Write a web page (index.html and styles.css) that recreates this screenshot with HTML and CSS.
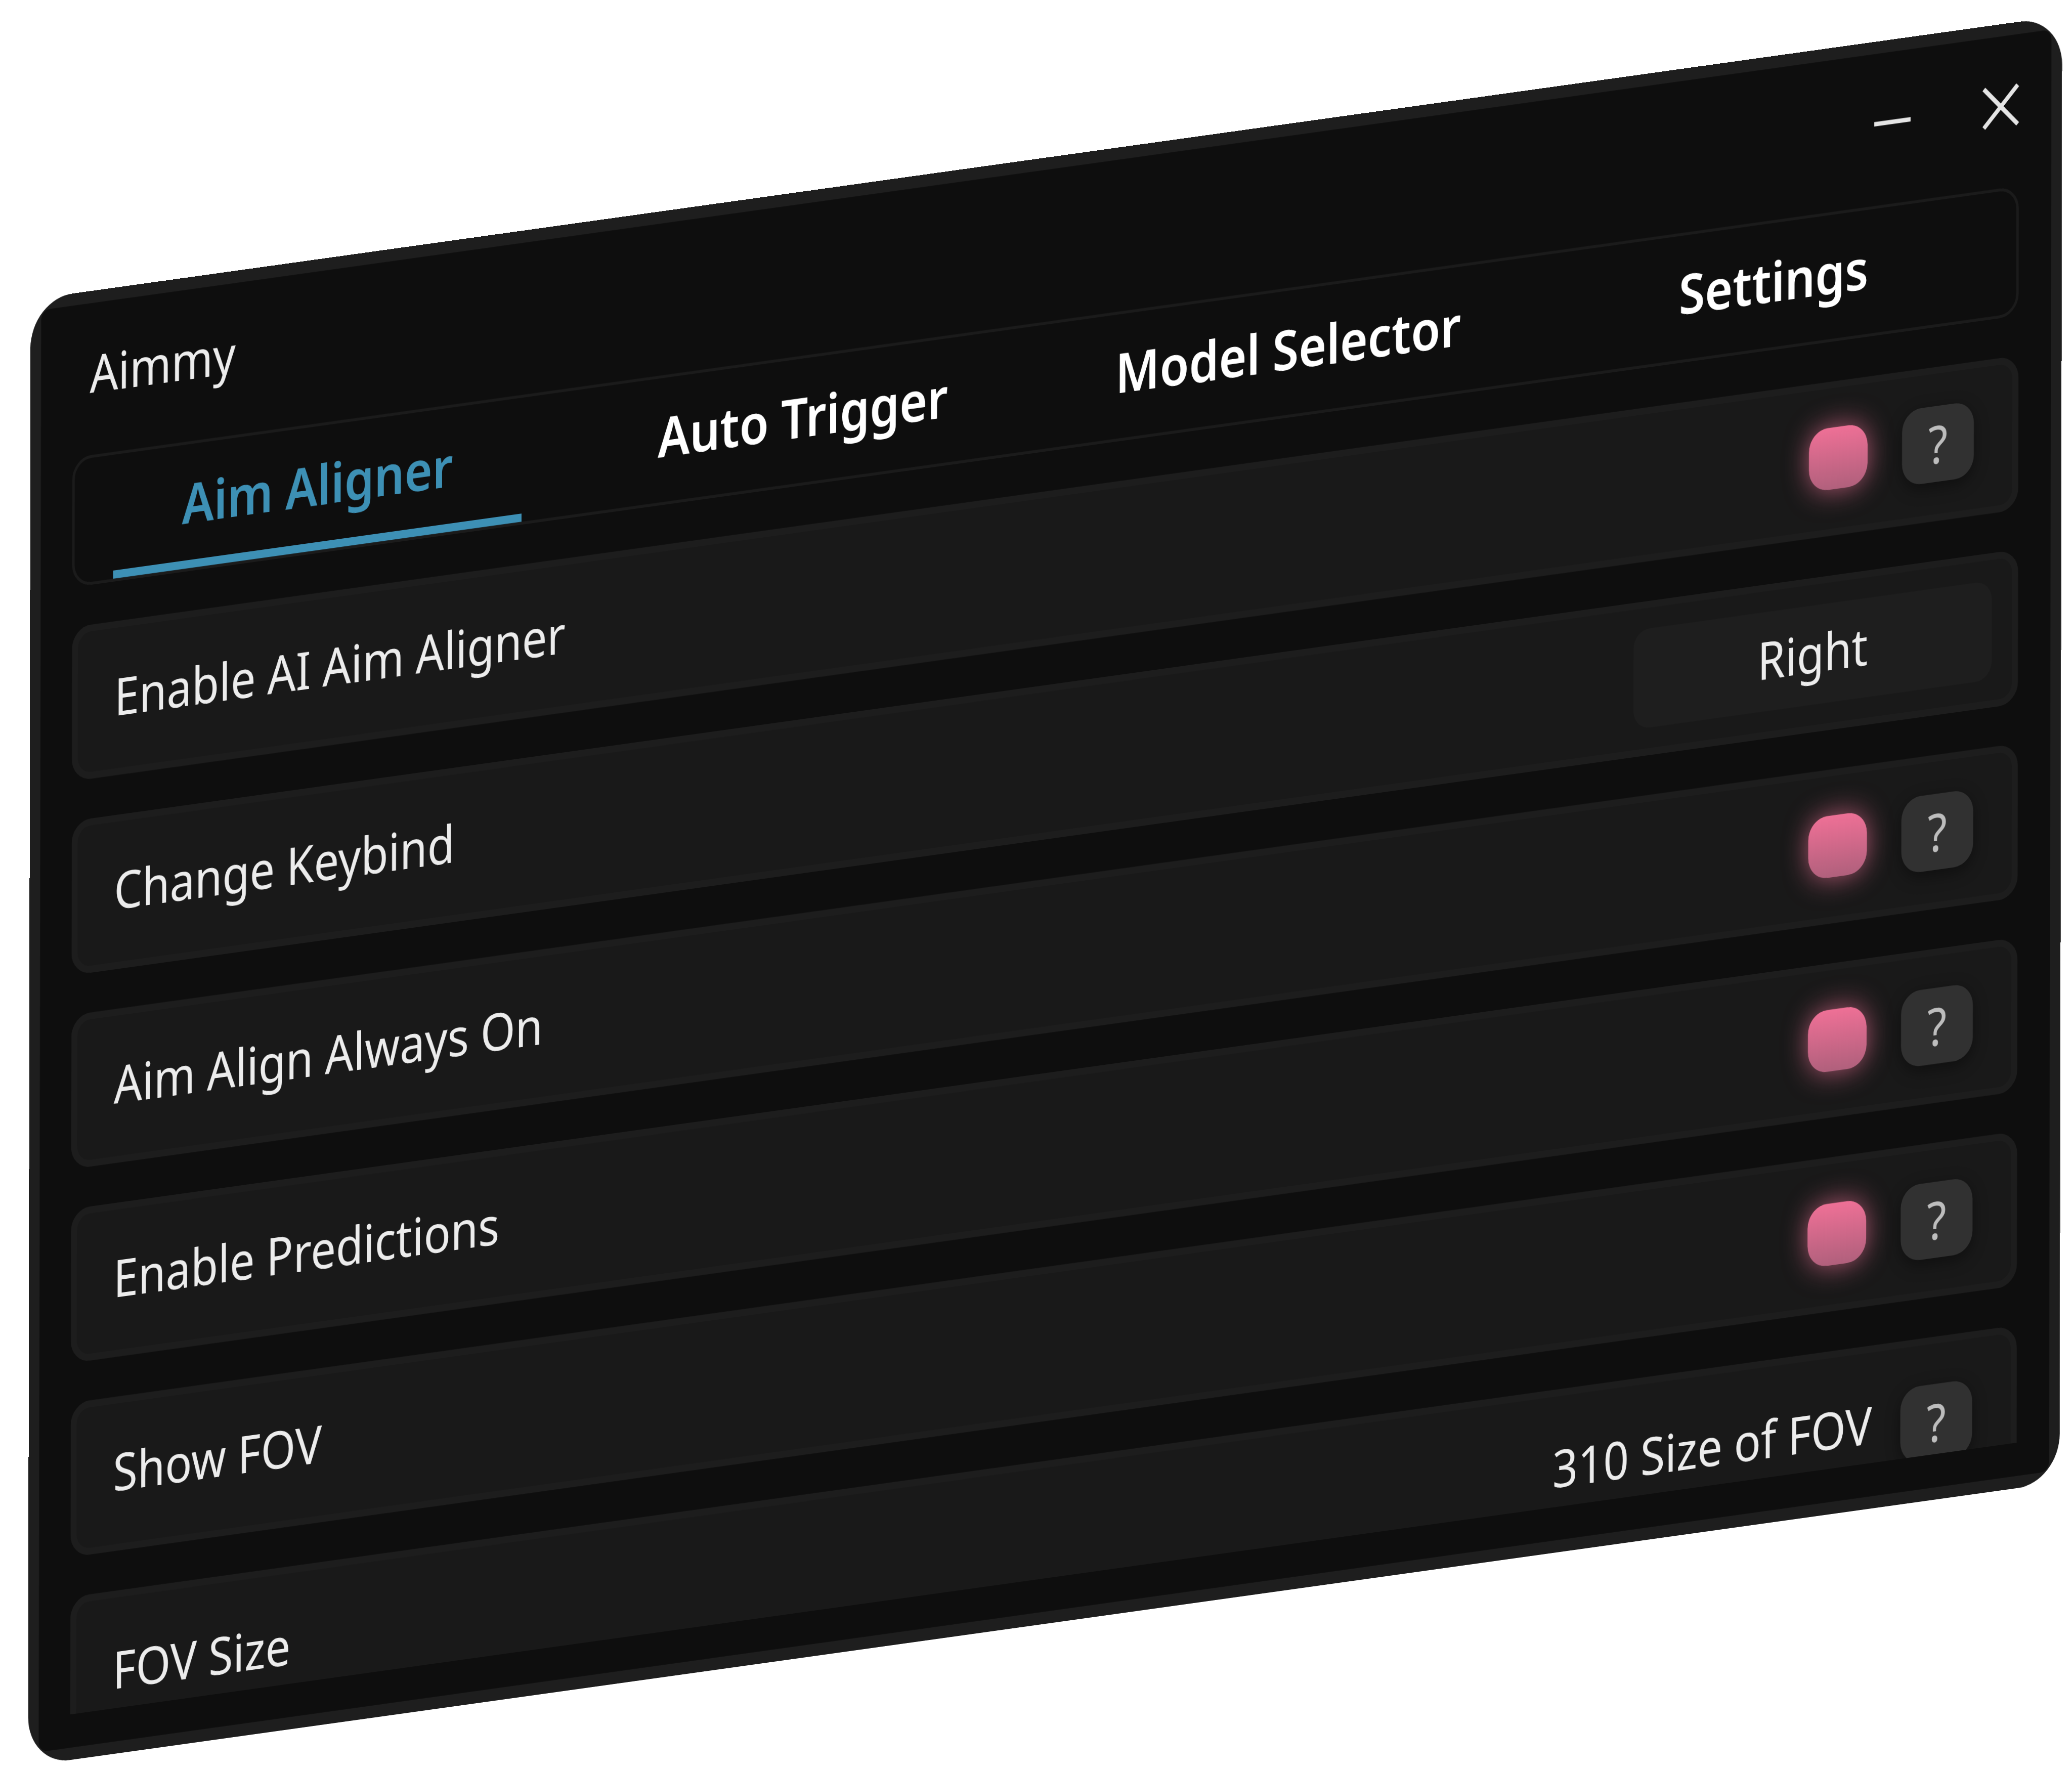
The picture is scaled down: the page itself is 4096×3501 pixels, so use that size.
FILE: index.html
```html
<!DOCTYPE html>
<html lang="en">
<head>
<meta charset="utf-8">
<title>Aimmy</title>
<link rel="stylesheet" href="styles.css">
</head>
<body>
<main class="window">
  <div class="panel">
    <header class="titlebar">
      <h1 class="title">Aimmy</h1>
      <div class="window-buttons">
        <button class="window-button" type="button" aria-label="Minimize">
          <svg viewBox="0 0 84 84"><path d="M0 42H84"/></svg>
        </button>
        <button class="window-button" type="button" aria-label="Close">
          <svg viewBox="0 0 84 84"><path d="M3 3L81 81M81 3L3 81"/></svg>
        </button>
      </div>
    </header>

    <nav class="tabs">
      <button class="tab tab-active" type="button">Aim Aligner</button>
      <button class="tab" type="button">Auto Trigger</button>
      <button class="tab" type="button">Model Selector</button>
      <button class="tab" type="button">Settings</button>
    </nav>

    <section class="options">
      <div class="row">
        <label class="label" for="aligner">Enable AI Aim Aligner</label>
        <input class="toggle" id="aligner" type="checkbox" checked>
        <button class="help" type="button">?</button>
      </div>
      <div class="row row-keybind">
        <label class="label" for="keybind">Change Keybind</label>
        <button class="keybind" id="keybind" type="button">Right</button>
      </div>
      <div class="row">
        <label class="label" for="always">Aim Align Always On</label>
        <input class="toggle" id="always" type="checkbox" checked>
        <button class="help" type="button">?</button>
      </div>
      <div class="row">
        <label class="label" for="predictions">Enable Predictions</label>
        <input class="toggle" id="predictions" type="checkbox" checked>
        <button class="help" type="button">?</button>
      </div>
      <div class="row">
        <label class="label" for="fov">Show FOV</label>
        <input class="toggle" id="fov" type="checkbox" checked>
        <button class="help" type="button">?</button>
      </div>
      <div class="row row-tall">
        <label class="label" for="fov-size">FOV Size</label>
        <output class="value" id="fov-size">310 Size of FOV</output>
        <button class="help" type="button">?</button>
      </div>
    </section>
  </div>
</main>
</body>
</html>
```
FILE: styles.css
```css
* {
  box-sizing: border-box;
}

html,
body {
  height: 100%;
}

body {
  margin: 0;
  padding: 506px 0 0 36px;
  display: flex;
  justify-content: center;
  align-items: flex-start;
  overflow: hidden;
  background: #fff;
  font-family: "Noto Sans", "Open Sans", sans-serif;
  font-size: 88px;
  line-height: 120px;
  color: #ececec;
}

button {
  margin: 0;
  padding: 0;
  border: 0;
  background: none;
  color: inherit;
  font: inherit;
}

/* The whole window is shown close up and turned away to the side. */
.window {
  flex: none;
  display: flex;
  width: 98vw;
  height: 71.7vh;
  padding: 21px;
  border-radius: 83px;
  overflow: hidden;
  background: #1e1e1e;
  transform: skewX(-0.1deg) skewY(-7.95deg) rotateY(30deg) scale(1.155);
}

.panel {
  flex: 1;
  display: flex;
  flex-direction: column;
  min-width: 0;
  padding: 0 64px 57px 62px;
  border-radius: 17px;
  background: #0e0e0e;
}

.titlebar {
  flex: none;
  display: flex;
  align-items: center;
  justify-content: space-between;
  height: 240px;
  margin-bottom: 20px;
  padding-left: 34px;
}

.title {
  margin: 0;
  font-size: inherit;
  font-weight: 400;
}

.window-buttons {
  display: flex;
  gap: 142px;
}

.window-button,
.window-button svg {
  display: block;
  width: 72px;
  height: 72px;
}

.window-button path {
  fill: none;
  stroke: #e4e4e4;
  stroke-width: 9;
}

.tabs {
  flex: none;
  display: grid;
  grid-template-columns: repeat(4, 1fr);
  height: 222px;
  margin-bottom: 68px;
  border: 5px solid #1b1b1b;
  border-radius: 38px;
}

.tab {
  margin: 0 76px;
  border-bottom: 14px solid transparent;
  color: #fff;
  font-size: 94px;
  font-weight: 600;
  white-space: nowrap;
}

.tab-active {
  border-color: #3d90b5;
  color: #3d90b5;
}

.options {
  flex: 1;
  display: flex;
  flex-direction: column;
  gap: 68px;
  min-height: 0;
  overflow: hidden;
}

.row {
  flex: none;
  display: flex;
  align-items: center;
  gap: 68px;
  height: 264px;
  padding: 0 76px 0 72px;
  border: 12px solid #1d1d1d;
  border-radius: 38px;
  background: #191919;
}

.row-keybind {
  padding-right: 40px;
}

.label {
  flex: 1;
  padding-bottom: 8px;
}

.row-tall {
  height: 292px;
  gap: 56px;
}

.row-tall .label,
.row-tall .value {
  padding-bottom: 24px;
}

.toggle {
  appearance: none;
  width: 116px;
  height: 106px;
  margin: 0;
  border-radius: 38px;
  background: linear-gradient(#ee7096, #b0607c);
  box-shadow: 0 0 48px rgba(238, 112, 150, 0.7);
}

.help {
  width: 142px;
  height: 130px;
  border-radius: 38px;
  background: #313131;
  box-shadow: 0 8px 28px rgba(0, 0, 0, 0.4);
  color: #bdbdbd;
}

.keybind {
  width: 708px;
  height: 170px;
  padding-bottom: 8px;
  border-radius: 32px;
  background: #1e1e1e;
}
```
